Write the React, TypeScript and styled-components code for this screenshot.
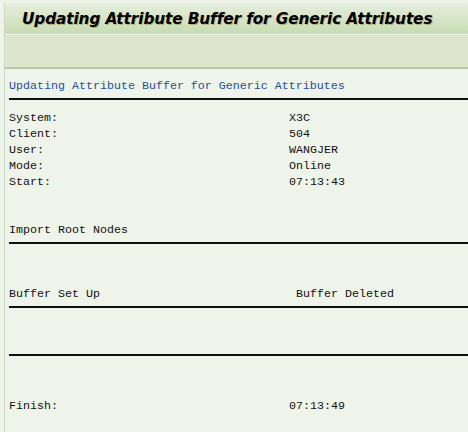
import React from 'react'
import styled, { createGlobalStyle } from 'styled-components';

const GlobalStyle = createGlobalStyle`
html, body {
  margin: 0;
  padding: 0;
  background: #eff4ea;
  overflow: hidden;
}
`;

const Screen = styled.div`
width: 468px;
height: 432px;
display: flex;
background: #eff4ea;
padding-top: 3px;
box-sizing: border-box;
`;

const Gutter = styled.div`
width: 4px;
flex: none;
`;

const Frame = styled.div`
flex: 1;
display: flex;
flex-direction: column;
border-left: 1px solid #c9d8c0;
`;

const TitleBar = styled.div`
height: 31px;
display: flex;
align-items: center;
padding-left: 17px;
background: linear-gradient(#e6eedd, #d3e4c4 60%, #c6dcb2);
border-bottom: 1px solid #eef3e6;
`;

const Title = styled.h1`
margin: 0;
font-family: "DejaVu Sans", Verdana, sans-serif;
font-size: 15.3px;
font-weight: bold;
font-style: italic;
color: #000;
letter-spacing: -0.1px;
text-shadow: 1px 1px 0 rgba(140, 110, 40, 0.45);
white-space: nowrap;
`;

const Toolbar = styled.div`
height: 32px;
background: #dde6cd;
border-bottom: 2px solid #b9c9ae;
`;

const List = styled.div`
padding: 9px 0 0 4px;
display: flex;
flex-direction: column;
`;

interface RowProps {
  blue?: boolean;
}

const Row = styled.div<RowProps>`
height: 16px;
line-height: 16px;
display: flex;
font-family: "Liberation Mono", "Courier New", monospace;
font-size: 11.67px;
color: ${({ blue }) => (blue ? '#1f4f9c' : '#111')};
white-space: pre;
`;

interface CellProps {
  cols?: number;
}

const Cell = styled.span<CellProps>`
width: ${({ cols }) => (cols ? `${cols * 7}px` : 'auto')};
flex: none;
`;

const RuleRow = styled.div`
height: 16px;
display: flex;
flex-direction: column;
`;

const Rule = styled.div`
margin-top: 4px;
height: 2px;
background: #111;
`;

const Blank = styled.div`
height: 16px;
`;

const info = [
  ['System:', 'X3C'],
  ['Client:', '504'],
  ['User:', 'WANGJER'],
  ['Mode:', 'Online'],
  ['Start:', '07:13:43'],
];

function App() {
  return (
    <Screen>
      <GlobalStyle />
      <Gutter />
      <Frame>
        <TitleBar>
          <Title>Updating Attribute Buffer for Generic Attributes</Title>
        </TitleBar>
        <Toolbar />
        <List>
          <Row blue>Updating Attribute Buffer for Generic Attributes</Row>
          <RuleRow><Rule /></RuleRow>
          {info.map(([label, value]) => (
            <Row key={label}>
              <Cell cols={40}>{label}</Cell>
              <Cell>{value}</Cell>
            </Row>
          ))}
          <Blank />
          <Blank />
          <Row>Import Root Nodes</Row>
          <RuleRow><Rule /></RuleRow>
          <Blank />
          <Blank />
          <Row>
            <Cell cols={41}>Buffer Set Up</Cell>
            <Cell>Buffer Deleted</Cell>
          </Row>
          <RuleRow><Rule /></RuleRow>
          <Blank />
          <Blank />
          <RuleRow><Rule /></RuleRow>
          <Blank />
          <Blank />
          <Row>
            <Cell cols={40}>Finish:</Cell>
            <Cell>07:13:49</Cell>
          </Row>
        </List>
      </Frame>
    </Screen>
  )
}

export default App
